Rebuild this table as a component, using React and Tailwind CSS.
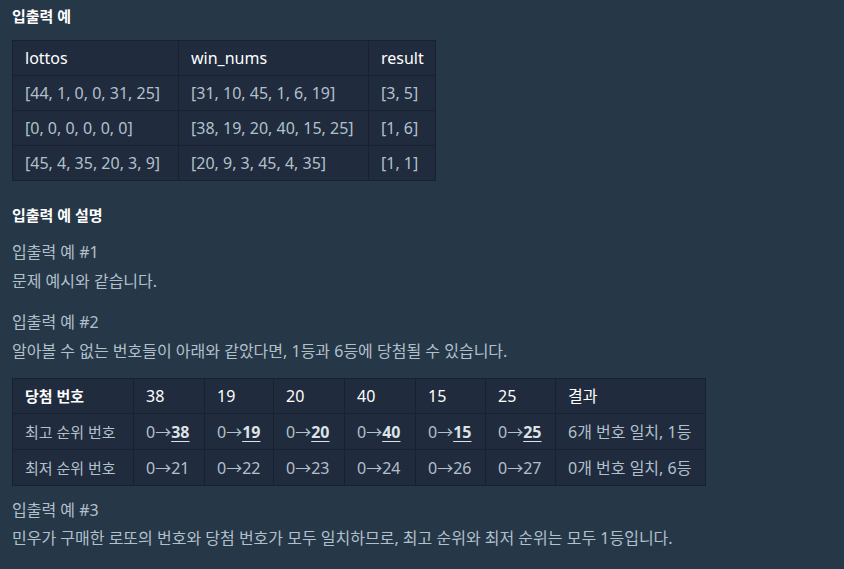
import React from "react";

const FONT = { fontFamily: '"Noto Sans", "Noto Sans CJK KR", sans-serif' };

const t1 = [
  ["[44, 1, 0, 0, 31, 25]", "[31, 10, 45, 1, 6, 19]", "[3, 5]"],
  ["[0, 0, 0, 0, 0, 0]", "[38, 19, 20, 40, 15, 25]", "[1, 6]"],
  ["[45, 4, 35, 20, 3, 9]", "[20, 9, 3, 45, 4, 35]", "[1, 1]"],
];

const nums = ["38", "19", "20", "40", "15", "25"];
const low = ["21", "22", "23", "24", "26", "27"];
const w2 = ["w-[121px]", "w-[71px]", "w-[69px]", "w-[71px]", "w-[71px]", "w-[70px]", "w-[70px]", "w-[150px]"];

const cell = "border border-[#172130] px-3 py-[5px] leading-6 text-left align-middle whitespace-nowrap";

function Arrow() {
  return <span className="font-['Noto_Sans_CJK_KR']">→</span>;
}

export default function App() {
  return (
    <div className="min-h-[569px] w-[844px] bg-[#263747] pl-3 pt-[6px] text-[#b2c0cc]" style={FONT}>
      <h5 className="text-[15px] font-bold leading-[21px] text-white">입출력 예</h5>

      <table className="mt-[13px] w-[423px] table-fixed border-collapse bg-[#202b3d] text-[16px]">
        <thead>
          <tr>
            <th className={`${cell} w-[166px] font-normal text-white`}>lottos</th>
            <th className={`${cell} w-[190px] font-normal text-white`}>win_nums</th>
            <th className={`${cell} w-[67px] font-normal text-white`}>result</th>
          </tr>
        </thead>
        <tbody>
          {t1.map((r, i) => (
            <tr key={i}>
              {r.map((c, j) => (
                <td key={j} className={cell}>{c}</td>
              ))}
            </tr>
          ))}
        </tbody>
      </table>

      <h5 className="mt-[24px] text-[15px] font-bold leading-[21px] text-white">입출력 예 설명</h5>

      <p className="mt-[12px] text-[16px] leading-[29px]">
        입출력 예 #1
        <br />
        문제 예시와 같습니다.
      </p>

      <p className="mt-[12px] text-[16px] leading-[29px]">
        입출력 예 #2
        <br />
        알아볼 수 없는 번호들이 아래와 같았다면, 1등과 6등에 당첨될 수 있습니다.
      </p>

      <table className="mt-[12px] w-[693px] table-fixed border-collapse bg-[#202b3d] text-[16px]">
        <thead>
          <tr>
            <th className={`${cell} ${w2[0]} text-[15px] font-bold text-white`}>당첨 번호</th>
            {nums.map((n, i) => (
              <th key={n} className={`${cell} ${w2[i + 1]} font-normal text-white`}>{n}</th>
            ))}
            <th className={`${cell} ${w2[7]} font-normal text-white`}>결과</th>
          </tr>
        </thead>
        <tbody>
          <tr>
            <td className={`${cell} text-[15px]`}>최고 순위 번호</td>
            {nums.map((n) => (
              <td key={n} className={cell}>
                0<Arrow />
                <b className="font-bold text-[#dbe2e8] underline underline-offset-[3px]">{n}</b>
              </td>
            ))}
            <td className={cell}>6개 번호 일치, 1등</td>
          </tr>
          <tr>
            <td className={`${cell} text-[15px]`}>최저 순위 번호</td>
            {low.map((n) => (
              <td key={n} className={cell}>
                0<Arrow />
                {n}
              </td>
            ))}
            <td className={cell}>0개 번호 일치, 6등</td>
          </tr>
        </tbody>
      </table>

      <p className="mt-[10px] pb-4 text-[16px] leading-[28px]">
        입출력 예 #3
        <br />
        민우가 구매한 로또의 번호와 당첨 번호가 모두 일치하므로, 최고 순위와 최저 순위는 모두 1등입니다.
      </p>
    </div>
  );
}
